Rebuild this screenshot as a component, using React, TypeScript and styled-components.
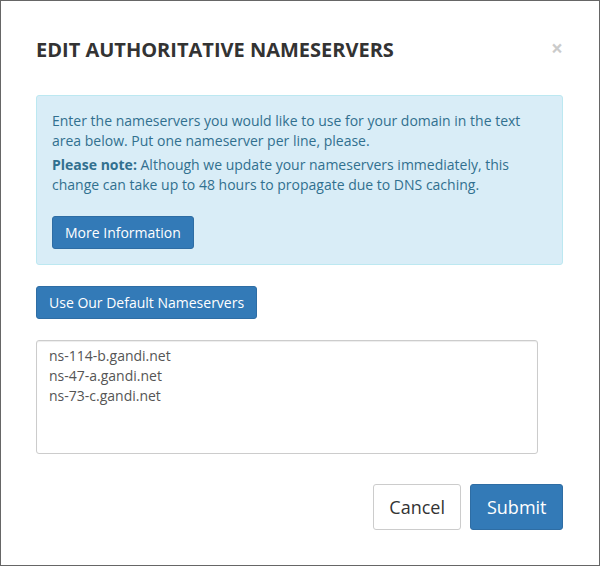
import React from "react";
import styled, { createGlobalStyle } from "styled-components";

const Global = createGlobalStyle`
  html, body { margin: 0; padding: 0; background: #fff; }
  body { font-family: "Open Sans", "DejaVu Sans", sans-serif; }
  * { box-sizing: border-box; }
`;

const Dialog = styled.div`
  width: 600px;
  height: 566px;
  border: 1px solid #666;
  background: #fff;
  padding: 0 36px 0 35px;
  display: flex;
  flex-direction: column;
`;

const Header = styled.div`
  display: flex;
  justify-content: space-between;
  align-items: flex-start;
  padding-top: 38px;
`;

const Title = styled.h4`
  margin: 0;
  font-size: 20px;
  line-height: 22px;
  font-weight: 700;
  color: #333;
  text-transform: uppercase;
`;

const Close = styled.button`
  border: 0;
  background: none;
  padding: 0;
  margin: 0;
  font-family: "Open Sans", sans-serif;
  font-size: 21px;
  line-height: 18px;
  font-weight: 700;
  color: #000;
  opacity: 0.2;
  cursor: pointer;
`;

const Alert = styled.div`
  margin-top: 34px;
  padding: 15px;
  border: 1px solid #bce8f1;
  border-radius: 3px;
  background: #d9edf7;
  color: #31708f;
`;

const Para = styled.p<{ $gap?: number }>`
  margin: 0 0 ${(p) => p.$gap ?? 0}px;
  font-size: 14px;
  line-height: 20px;
`;

const Button = styled.button<{ $variant?: "primary" | "default"; $size?: "lg" | "md" }>`
  display: inline-block;
  font-family: "Open Sans", sans-serif;
  border-radius: 3px;
  cursor: pointer;
  border: 1px solid ${(p) => (p.$variant === "default" ? "#ccc" : "#2e6da4")};
  background: ${(p) => (p.$variant === "default" ? "#fff" : "#337ab7")};
  color: ${(p) => (p.$variant === "default" ? "#333" : "#fff")};
  font-size: ${(p) => (p.$size === "lg" ? "18px" : "14px")};
  line-height: ${(p) => (p.$size === "lg" ? "24px" : "19px")};
  padding: ${(p) => (p.$size === "lg" ? "10px 15.5px" : "6px 12px")};
`;

const ButtonRow = styled.div<{ $top: number; $end?: boolean }>`
  margin-top: ${(p) => p.$top}px;
  display: flex;
  justify-content: ${(p) => (p.$end ? "flex-end" : "flex-start")};
  gap: 9px;
`;

const TextArea = styled.textarea`
  margin-top: 21px;
  width: 502px;
  height: 114px;
  border: 1px solid #ccc;
  border-radius: 3px;
  padding: 5px 12px;
  font-family: "Open Sans", sans-serif;
  font-size: 14px;
  line-height: 20px;
  color: #555;
  resize: none;
  outline: none;
  box-shadow: inset 0 1px 1px rgba(0, 0, 0, 0.075);
`;

export default function App() {
  return (
    <>
      <Global />
      <Dialog>
        <Header>
          <Title>Edit Authoritative Nameservers</Title>
          <Close aria-label="Close">×</Close>
        </Header>
        <Alert>
          <Para $gap={4}>
            Enter the nameservers you would like to use for your domain in the text area below. Put one
            nameserver per line, please.
          </Para>
          <Para>
            <strong>Please note:</strong> Although we update your nameservers immediately, this change can
            take up to 48 hours to propagate due to DNS caching.
          </Para>
          <ButtonRow $top={21}>
            <Button $variant="primary">More Information</Button>
          </ButtonRow>
        </Alert>
        <ButtonRow $top={21}>
          <Button $variant="primary">Use Our Default Nameservers</Button>
        </ButtonRow>
        <TextArea
          defaultValue={"ns-114-b.gandi.net\nns-47-a.gandi.net\nns-73-c.gandi.net"}
        />
        <ButtonRow $top={30} $end>
          <Button $variant="default" $size="lg">Cancel</Button>
          <Button $variant="primary" $size="lg">Submit</Button>
        </ButtonRow>
      </Dialog>
    </>
  );
}
